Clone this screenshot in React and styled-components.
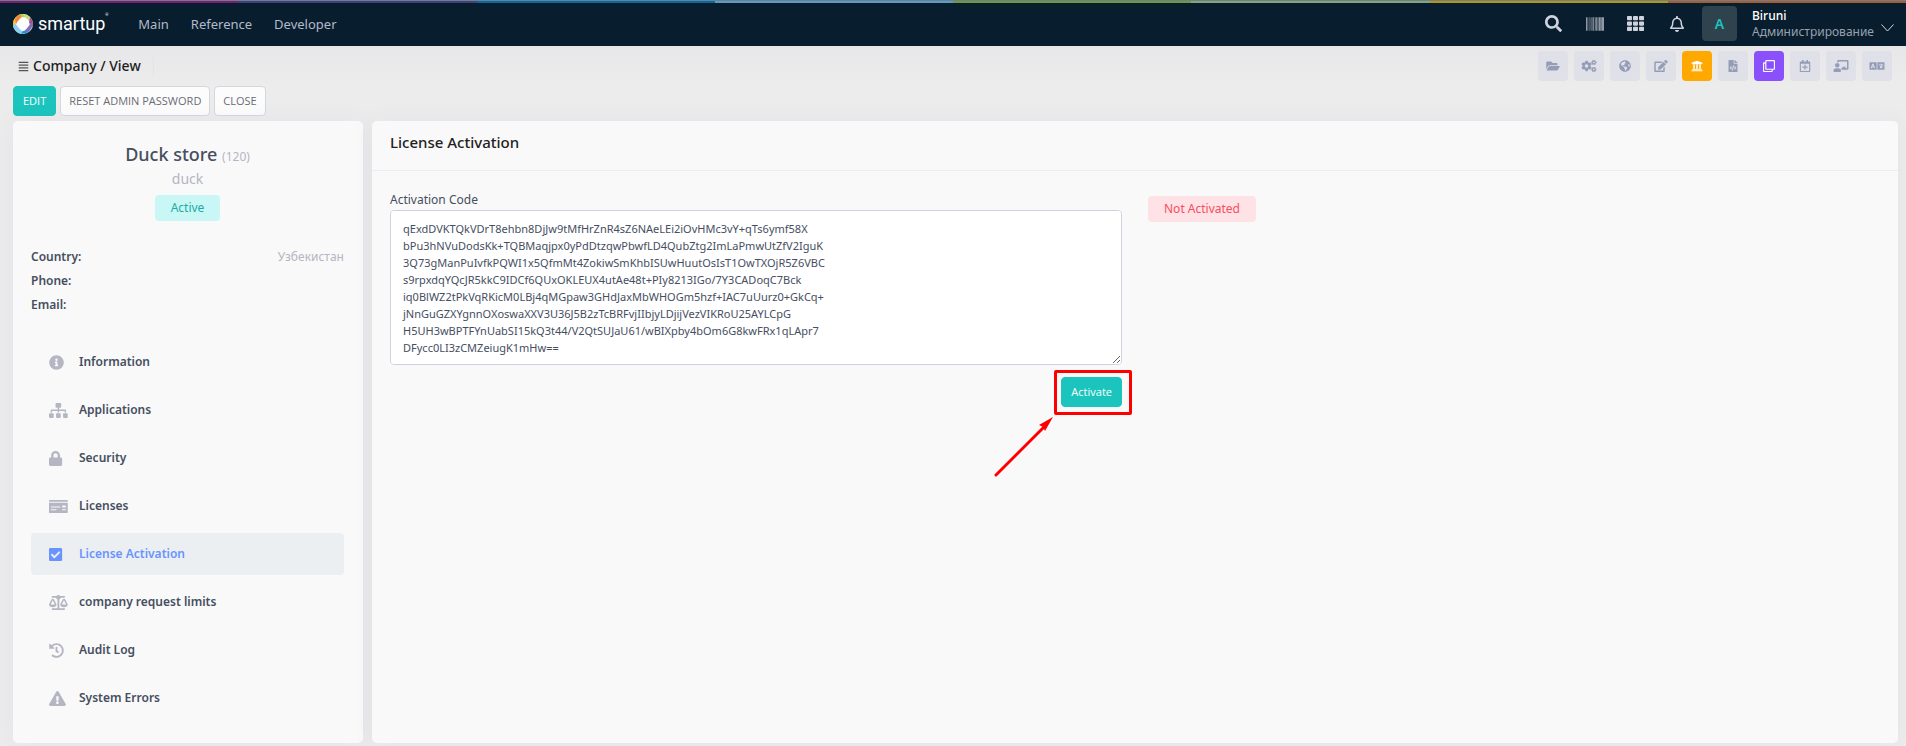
import React from "react";
import styled, { createGlobalStyle, css } from "styled-components";
import {
  FaSearch, FaBarcode, FaTh, FaRegBell, FaFolderOpen, FaCogs, FaGlobeAmericas, FaEdit,
  FaUniversity, FaFileCode, FaRegClone, FaRegCalendarPlus, FaChalkboardTeacher, FaLanguage,
  FaInfoCircle, FaSitemap, FaLock, FaMoneyCheck, FaCheckSquare, FaBalanceScale, FaHistory,
  FaExclamationTriangle, FaAlignJustify,
} from "react-icons/fa";

const GlobalStyle = createGlobalStyle`
  *, *::before, *::after { box-sizing: border-box; }
  body {
    margin: 0;
    background: #ececed;
    color: #464e5f;
    font: 400 13px/20px "Noto Sans", "Open Sans", sans-serif;
  }
  button, textarea { font: inherit; }
  h1, h2, p, dl, dd, ul { margin: 0; padding: 0; }
`;

const Page = styled.div`
  display: flex;
  flex-direction: column;
  min-height: 100vh;
`;

const Stripe = styled.div`
  display: flex;
  height: 3px;
  border-top: 1px solid #6d7f8c;
`;

const StripeBand = styled.span`
  flex: 1;
  background: ${(p) => p.$color};
`;

const Header = styled.header`
  display: flex;
  align-items: center;
  height: 43px;
  padding: 0 12px 2px 13px;
  background: #081e2e;
`;

const Brand = styled.a`
  display: flex;
  align-items: center;
  gap: 5px;
  color: #fff;
  text-decoration: none;
  font: 400 18px/26px "Roboto", sans-serif;
  svg { display: block; }
  sup { width: 3px; margin-left: -5px; align-self: flex-start; font-size: 4px; line-height: 8px; }
`;

const Nav = styled.nav`
  display: flex;
  gap: 22px;
  margin-left: 30px;
`;

const NavLink = styled.a`
  color: #b4bac8;
  text-decoration: none;
`;

const HeaderTools = styled.div`
  display: flex;
  align-items: center;
  margin-left: auto;
`;

const HeaderButton = styled.button`
  display: flex;
  align-items: center;
  justify-content: center;
  width: 41px;
  height: 40px;
  padding: 0;
  border: 0;
  background: none;
  color: #d0d2dd;
  font-size: ${(p) => p.$size}px;
`;

const Profile = styled.button`
  display: flex;
  align-items: center;
  gap: 15px;
  margin-left: 5px;
  padding: 0;
  border: 0;
  background: none;
  text-align: left;
`;

const Avatar = styled.span`
  width: 35px;
  height: 35px;
  border-radius: 4px;
  background: #2f434f;
  color: #1bc5bd;
  font-size: 14px;
  font-weight: 600;
  line-height: 35px;
  text-align: center;
`;

const Identity = styled.span`
  display: flex;
  flex-direction: column;
  color: #9aa0b0;
  font-size: 12px;
  line-height: 16px;
  strong { color: #fff; font-weight: 500; }
`;

const Chevron = styled.svg`
  margin-left: -8px;
  margin-top: 8px;
`;

const SubHeader = styled.div`
  display: flex;
  align-items: center;
  justify-content: space-between;
  height: 40px;
  padding: 0 14px 0 18px;
  background: linear-gradient(#e7e7e9, #ececed);
`;

const Crumb = styled.h1`
  display: flex;
  align-items: center;
  gap: 4px;
  height: 22px;
  padding-right: 12px;
  border-right: 1px solid #e3e4e8;
  color: #212121;
  font-size: 14px;
  font-weight: 500;
  svg { width: 11px; height: 11px; color: #555; }
`;

const Shortcuts = styled.div`
  display: flex;
  gap: 6px;
`;

const tones = {
  plain: ["#dfe0e8", "#959cb6"],
  amber: ["#ffa800", "#fff"],
  violet: ["#8950fc", "#fff"],
};

const Shortcut = styled.button`
  display: flex;
  align-items: center;
  justify-content: center;
  width: 30px;
  height: 30px;
  padding: 0;
  border: 0;
  border-radius: 4px;
  background: ${(p) => tones[p.$tone][0]};
  color: ${(p) => tones[p.$tone][1]};
  svg { width: 20px; height: 12px; }
`;

const Actions = styled.div`
  display: flex;
  gap: 4px;
  padding: 0 13px;
`;

const Button = styled.button`
  height: 30px;
  padding: 0 8px;
  border: 1px solid #d3d7e0;
  border-radius: 4px;
  background: #fcfcfc;
  color: #6a6c75;
  font-family: "Open Sans", "Noto Sans", sans-serif;
  font-size: 11px;
  white-space: nowrap;
  ${(p) => p.$primary && css`
    padding: 0 9px;
    border-color: #1bc5bd;
    background: #1bc5bd;
    color: #fff;
  `}
`;

const Main = styled.main`
  display: grid;
  flex: 1;
  grid-template-columns: 350px 1fr;
  gap: 9px;
  padding: 5px 8px 4px 13px;
`;

const Card = styled.section`
  border-radius: 5px;
  background: #f9f9f9;
  box-shadow: 0 0 24px rgba(82, 63, 105, 0.05);
`;

const SideCard = styled(Card)`
  padding: 21px 19px 24px 18px;
`;

const Company = styled.div`
  display: flex;
  flex-direction: column;
  align-items: center;
  color: #b5b5c3;
  h2 { color: #464e5f; font-size: 18px; font-weight: 500; line-height: 24px; }
  h2 small { color: #b5b5c3; font-size: 12px; font-weight: 400; }
  p { font-size: 14px; line-height: 20px; }
`;

const Badge = styled.span`
  display: inline-block;
  height: 26px;
  padding: 0 16px;
  border-radius: 4px;
  background: ${(p) => (p.$danger ? "#ffe2e5" : "#c9f7f5")};
  color: ${(p) => (p.$danger ? "#f64e60" : "#1aada6")};
  font-size: 12px;
  line-height: 26px;
`;

const CompanyBadge = styled(Badge)`
  margin-top: 6px;
`;

const Details = styled.dl`
  margin-top: 24px;
  font-size: 12px;
  line-height: 24px;
`;

const Detail = styled.div`
  display: flex;
  justify-content: space-between;
  dt { font-weight: 600; }
  dd { color: #b5b5c3; }
`;

const Menu = styled.nav`
  display: flex;
  flex-direction: column;
  gap: 6px;
  margin-top: 24px;
`;

const MenuLink = styled.a`
  display: grid;
  grid-template-columns: 30px 1fr;
  align-items: center;
  height: 42px;
  padding-left: 18px;
  border-radius: 4px;
  background: ${(p) => (p.$active ? "#ebeff2" : "none")};
  color: ${(p) => (p.$active ? "#6993ff" : "#464e5f")};
  font-size: 12px;
  font-weight: 600;
  text-decoration: none;
  svg { width: 20px; height: 15px; color: ${(p) => (p.$active ? "#6993ff" : "#b5b5c3")}; }
`;

const CardHeader = styled.header`
  height: 50px;
  padding: 10px 18px;
  border-bottom: 1px solid #ebedf3;
  h2 { color: #212121; font-size: 15px; font-weight: 500; line-height: 22px; }
`;

const CardBody = styled.div`
  display: grid;
  grid-template-columns: 1fr 1fr;
  gap: 26px;
  padding: 18px;
`;

const Form = styled.form`
  display: flex;
  flex-direction: column;
  label { font-size: 12px; line-height: 21px; }
`;

const CodeBox = styled.textarea`
  width: 100%;
  height: 155px;
  padding: 9px 12px;
  border: 1px solid #d0d3dd;
  border-radius: 4px;
  background: #fff;
  color: #464e5f;
  font-size: 11px;
  line-height: 17px;
  resize: vertical;
`;

const Status = styled.div`
  padding-top: 7px;
`;

const ActivateSlot = styled.div`
  position: relative;
  align-self: flex-end;
  margin-top: 12px;
`;

const Highlight = styled.span`
  position: absolute;
  inset: -7px -10px -8px -7px;
  border: 3px solid #f00;
  border-radius: 2px;
  pointer-events: none;
`;

const Pointer = styled.svg`
  position: absolute;
  top: 40px;
  right: 68px;
  pointer-events: none;
`;

const bands = ["#7c1d72", "#40407c", "#0569a5", "#5b9cc4", "#71983a", "#86a474", "#b4960f", "#ad5b2a"];

const headerTools = [
  ["Search", FaSearch, 17],
  ["Barcode", FaBarcode, 18],
  ["Apps", FaTh, 17],
  ["Notifications", FaRegBell, 16],
];

const shortcuts = [
  ["Files", FaFolderOpen],
  ["Settings", FaCogs],
  ["World", FaGlobeAmericas],
  ["Edit", FaEdit],
  ["Bank", FaUniversity, "amber"],
  ["Source", FaFileCode],
  ["Clone", FaRegClone, "violet"],
  ["Schedule", FaRegCalendarPlus],
  ["Training", FaChalkboardTeacher],
  ["Language", FaLanguage],
];

const menu = [
  ["Information", FaInfoCircle],
  ["Applications", FaSitemap],
  ["Security", FaLock],
  ["Licenses", FaMoneyCheck],
  ["License Activation", FaCheckSquare],
  ["company request limits", FaBalanceScale],
  ["Audit Log", FaHistory],
  ["System Errors", FaExclamationTriangle],
];

const code = `qExdDVKTQkVDrT8ehbn8DjJw9tMfHrZnR4sZ6NAeLEi2iOvHMc3vY+qTs6ymf58X
bPu3hNVuDodsKk+TQBMaqjpx0yPdDtzqwPbwfLD4QubZtg2ImLaPmwUtZfV2IguK
3Q73gManPuIvfkPQWI1x5QfmMt4ZokiwSmKhbISUwHuutOsIsT1OwTXOjR5Z6VBC
s9rpxdqYQcJR5kkC9IDCf6QUxOKLEUX4utAe48t+PIy8213IGo/7Y3CADoqC7Bck
iq0BlWZ2tPkVqRKicM0LBj4qMGpaw3GHdJaxMbWHOGm5hzf+IAC7uUurz0+GkCq+
jNnGuGZXYgnnOXoswaXXV3U36J5B2zTcBRFvjIIbjyLDjijVezVIKRoU25AYLCpG
H5UH3wBPTFYnUabSI15kQ3t44/V2QtSUJaU61/wBIXpby4bOm6G8kwFRx1qLApr7
DFycc0LI3zCMZeiugK1mHw==`;

function LogoMark() {
  return (
    <svg width="20" height="20" viewBox="0 0 20 20" aria-hidden="true">
      <circle cx="10" cy="10" r="10" fill="#fff" />
      <path d="M4 2 A10 10 0 0 1 10 0 L13 3 L10 4 Z" fill="#b7d433" />
      <path d="M10 0 A10 10 0 0 1 17 3 L18 9 L12 3 Z" fill="#c5dc86" />
      <path d="M17 3 A10 10 0 0 1 19 14 L16 9 Z" fill="#a3508f" />
      <path d="M19 8 A10 10 0 0 1 14 19 L11 16 L17 10 Z" fill="#7d70b4" />
      <path d="M15 18 A10 10 0 0 1 6 19 L10 16 Z" fill="#1493d2" />
      <path d="M8 20 A10 10 0 0 1 0 10 L3 10 L10 17 Z" fill="#8fd0f2" />
      <path d="M0 11 A10 10 0 0 1 3 3 L4 9 Z" fill="#fcc02c" />
      <path d="M2 5 A10 10 0 0 1 7 0 L9 4 L3 10 Z" fill="#f3853c" />
      <path d="M10 3 Q12 3 15 7 Q18 10 15 13 Q12 17 10 17 Q8 17 5 13 Q2 10 5 7 Q8 3 10 3 Z" fill="#fff" />
    </svg>
  );
}

export default function App() {
  return (
    <Page>
      <GlobalStyle />
      <Stripe>{bands.map((c) => <StripeBand key={c} $color={c} />)}</Stripe>
      <Header>
        <Brand href="#"><LogoMark /><span>smartup</span><sup>®</sup></Brand>
        <Nav>
          <NavLink href="#main">Main</NavLink>
          <NavLink href="#reference">Reference</NavLink>
          <NavLink href="#developer">Developer</NavLink>
        </Nav>
        <HeaderTools>
          {headerTools.map(([label, Icon, size]) => (
            <HeaderButton key={label} type="button" aria-label={label} $size={size}><Icon /></HeaderButton>
          ))}
          <Profile type="button">
            <Avatar>A</Avatar>
            <Identity><strong>Biruni</strong><span>Администрирование</span></Identity>
            <Chevron width="13" height="8" viewBox="0 0 13 8" fill="none" stroke="#d5d8e0">
              <path d="M0.5 0.5 L6.5 7 L12.5 0.5" />
            </Chevron>
          </Profile>
        </HeaderTools>
      </Header>
      <SubHeader>
        <Crumb><FaAlignJustify />Company / View</Crumb>
        <Shortcuts>
          {shortcuts.map(([label, Icon, tone = "plain"]) => (
            <Shortcut key={label} type="button" aria-label={label} $tone={tone}><Icon /></Shortcut>
          ))}
        </Shortcuts>
      </SubHeader>
      <Actions>
        <Button type="button" $primary>EDIT</Button>
        <Button type="button">RESET ADMIN PASSWORD</Button>
        <Button type="button">CLOSE</Button>
      </Actions>
      <Main>
        <SideCard>
          <Company>
            <h2>Duck store <small>(120)</small></h2>
            <p>duck</p>
            <CompanyBadge>Active</CompanyBadge>
          </Company>
          <Details>
            <Detail><dt>Country:</dt><dd>Узбекистан</dd></Detail>
            <Detail><dt>Phone:</dt><dd /></Detail>
            <Detail><dt>Email:</dt><dd /></Detail>
          </Details>
          <Menu>
            {menu.map(([label, Icon]) => (
              <MenuLink key={label} href="#" $active={label === "License Activation"}>
                <Icon preserveAspectRatio="xMinYMid" /><span>{label}</span>
              </MenuLink>
            ))}
          </Menu>
        </SideCard>
        <Card>
          <CardHeader><h2>License Activation</h2></CardHeader>
          <CardBody>
            <Form onSubmit={(e) => e.preventDefault()}>
              <label htmlFor="code">Activation Code</label>
              <CodeBox id="code" defaultValue={code} spellCheck={false} />
              <ActivateSlot>
                <Button type="submit" $primary>Activate</Button>
                <Highlight />
                <Pointer width="60" height="60" viewBox="0 0 60 60" aria-hidden="true">
                  <path d="M2 58 L52 8" stroke="#f00" strokeWidth="3" strokeLinecap="round" />
                  <path d="M59 0 L51 14 L49 10 L45 8 Z" fill="#f00" />
                </Pointer>
              </ActivateSlot>
            </Form>
            <Status><Badge $danger>Not Activated</Badge></Status>
          </CardBody>
        </Card>
      </Main>
    </Page>
  );
}
